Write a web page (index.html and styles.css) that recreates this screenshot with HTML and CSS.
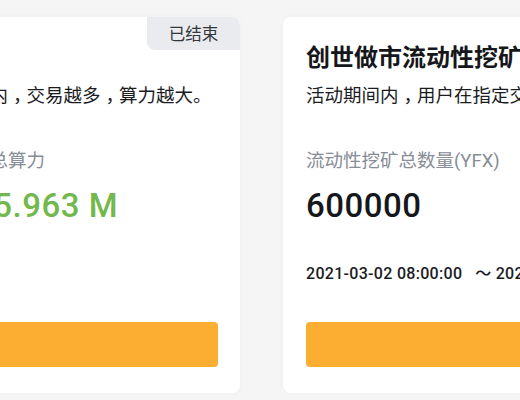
FILE: index.html
```html
<!DOCTYPE html>
<html lang="zh-CN">
<head>
<meta charset="utf-8">
<title>挖矿活动</title>
<link rel="stylesheet" href="styles.css">
</head>
<body>
<div class="row">
  <section class="card">
    <span class="badge">已结束</span>
    <h2 class="title">交易挖矿</h2>
    <p class="desc">在活动期间内<span class="cm">，</span>交易越多<span class="cm">，</span>算力越大。</p>
    <div class="label">全网用户的总算力</div>
    <div class="value green">283615.963 M</div>
    <div class="btn"></div>
  </section>
  <section class="card">
    <h2 class="title">创世做市流动性挖矿活动</h2>
    <p class="desc">活动期间内<span class="cm">，</span>用户在指定交易对中提供流动性</p>
    <div class="label">流动性挖矿总数量(YFX)</div>
    <div class="value">600000</div>
    <div class="date">2021-03-02 08:00:00&nbsp;&nbsp;&nbsp;～ 2021-03-09 08:00:00</div>
    <div class="btn"></div>
  </section>
</div>
</body>
</html>
```

FILE: styles.css
```css
html, body {
  margin: 0;
  padding: 0;
  background: #f5f5f6;
  overflow: hidden;
  width: 520px;
  height: 400px;
}

.row {
  display: flex;
  gap: 43px;
  padding-top: 17px;
  margin-left: -126px;
}

.card {
  position: relative;
  flex: 0 0 366px;
  height: 376px;
  box-sizing: border-box;
  padding: 23px 22px 26px 23px;
  background: #ffffff;
  border-radius: 8px;
  box-shadow: 0 0 6px rgba(0, 0, 0, 0.03);
  display: flex;
  flex-direction: column;
  white-space: nowrap;
  overflow: hidden;
  font-family: Roboto, "Noto Sans CJK SC", sans-serif;
  color: #1b1c1f;
}

.badge {
  position: absolute;
  top: 0;
  right: 0;
  width: 93px;
  height: 33px;
  line-height: 33px;
  text-align: center;
  background: #e9ebef;
  border-radius: 0 8px 0 8px;
  font-family: "Noto Sans CJK SC", sans-serif;
  font-size: 16.5px;
  color: #33363b;
}

.title {
  margin: 0;
  font-family: "Noto Sans CJK SC", sans-serif;
  font-size: 24px;
  line-height: 32px;
  font-weight: 700;
  color: #16171a;
}

.desc {
  margin: 9px 0 0;
  font-family: "Noto Sans CJK SC", sans-serif;
  font-size: 18.5px;
  line-height: 26px;
  color: #1b1c1f;
}

.cm {
  padding-left: 5px;
  letter-spacing: -5px;
}

.label {
  margin-top: 42px;
  font-size: 18.5px;
  line-height: 24px;
  color: #878c96;
}

.value {
  margin-top: 13px;
  font-size: 33px;
  line-height: 40px;
  font-weight: 500;
  letter-spacing: 0.5px;
  color: #16171a;
}

.value.green {
  color: #72b84c;
}

.date {
  margin-top: 37px;
  font-size: 16px;
  line-height: 22px;
  font-weight: 500;
  letter-spacing: 0.3px;
  color: #1b1c1f;
}

.btn {
  margin-top: auto;
  height: 45px;
  border-radius: 4px;
  background: #fcae33;
}
```
